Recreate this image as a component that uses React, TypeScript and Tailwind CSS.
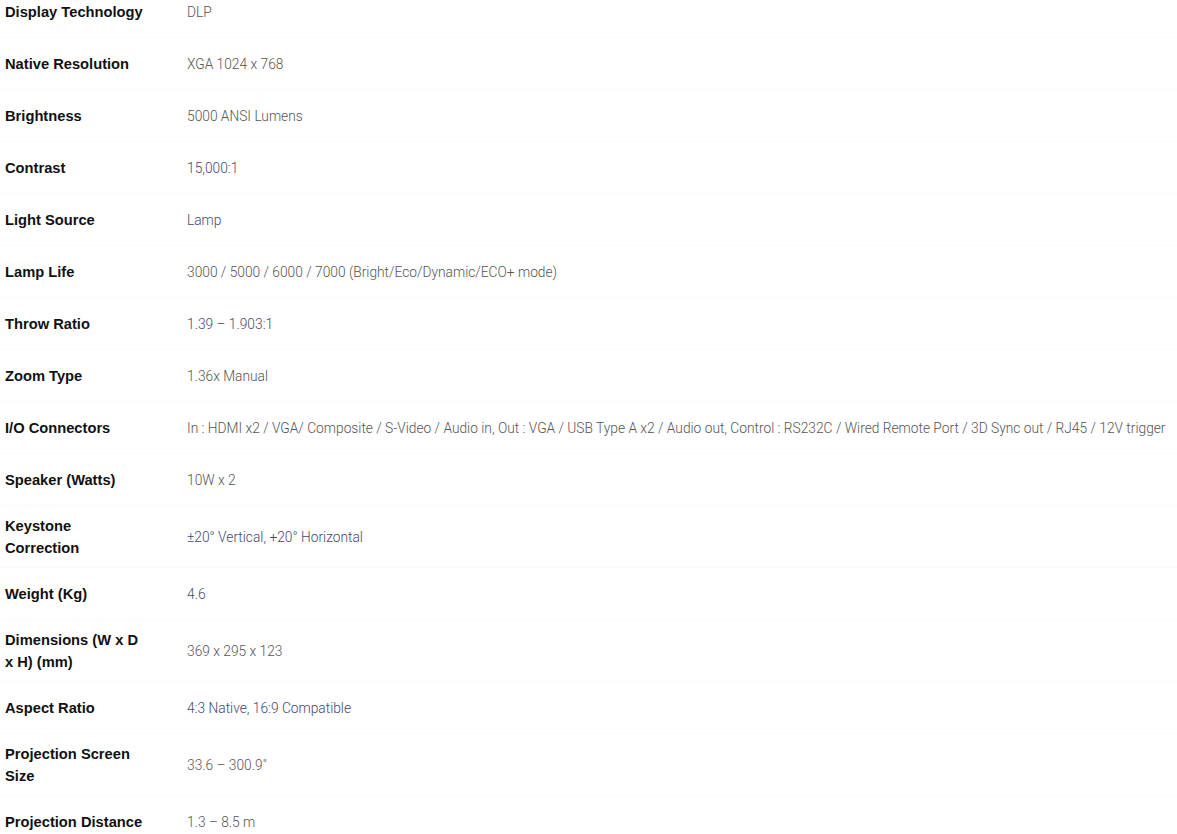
const specs: { label: string; value: string; blue?: boolean }[] = [
  { label: 'Display Technology', value: 'DLP' },
  { label: 'Native Resolution', value: 'XGA 1024 x 768' },
  { label: 'Brightness', value: '5000 ANSI Lumens' },
  { label: 'Contrast', value: '15,000:1', blue: true },
  { label: 'Light Source', value: 'Lamp', blue: true },
  { label: 'Lamp Life', value: '3000 / 5000 / 6000 / 7000 (Bright/Eco/Dynamic/ECO+ mode)' },
  { label: 'Throw Ratio', value: '1.39 – 1.903:1', blue: true },
  { label: 'Zoom Type', value: '1.36x Manual' },
  {
    label: 'I/O Connectors',
    value:
      'In : HDMI x2 / VGA/ Composite / S-Video / Audio in, Out : VGA / USB Type A x2 / Audio out, Control : RS232C / Wired Remote Port / 3D Sync out / RJ45 / 12V trigger',
  },
  { label: 'Speaker (Watts)', value: '10W x 2' },
  { label: 'Keystone Correction', value: '±20° Vertical, +20° Horizontal', blue: true },
  { label: 'Weight (Kg)', value: '4.6', blue: true },
  { label: 'Dimensions (W x D x H) (mm)', value: '369 x 295 x 123' },
  { label: 'Aspect Ratio', value: '4:3 Native, 16:9 Compatible', blue: true },
  { label: 'Projection Screen Size', value: '33.6 – 300.9"' },
  { label: 'Projection Distance', value: '1.3 – 8.5 m' },
];

export default function App() {
  return (
    <div className="min-h-screen bg-white overflow-hidden">
      <div className="-mt-[14px]">
        {specs.map((row) => (
          <div
            key={row.label}
            className="flex items-center min-h-[52px] py-[8.5px] border-b border-[#fbfbfb]"
          >
            <div className="w-[187px] shrink-0 pl-[5px] pr-[42px] font-['Liberation_Sans',Arial,sans-serif] font-bold text-[14.7px] leading-[22px] text-[#111]">
              {row.label}
            </div>
            <div
              className={
                row.blue
                  ? "font-['Roboto',sans-serif] font-light text-[13.75px] leading-[22px] text-[#44476f] whitespace-nowrap"
                  : "font-['Roboto',sans-serif] font-light text-[13.75px] leading-[22px] text-[#555]"
              }
            >
              {row.value}
            </div>
          </div>
        ))}
      </div>
    </div>
  );
}
